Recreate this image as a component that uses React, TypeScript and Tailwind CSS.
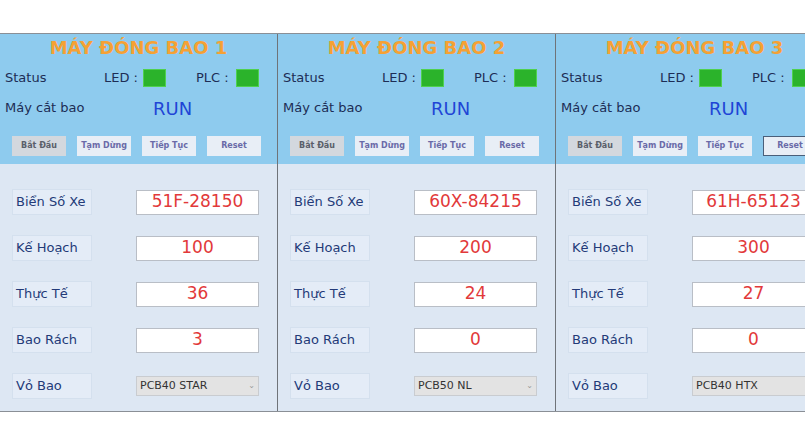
const machines = [
  { id: 1, plate: "51F-28150", plan: 100, actual: 36, torn: 3, bag: "PCB40 STAR", arrow: true },
  { id: 2, plate: "60X-84215", plan: 200, actual: 24, torn: 0, bag: "PCB50 NL", arrow: true },
  { id: 3, plate: "61H-65123", plan: 300, actual: 27, torn: 0, bag: "PCB40 HTX", arrow: false },
];

type Machine = (typeof machines)[number];

const ValueRow = ({ label, value }: { label: string; value: string | number }) => (
  <div className="flex h-[26px] items-center">
    <div className="ml-[12px] flex h-[26px] w-[80px] items-center border border-[#d4e0ee] bg-[#e4ecf7] pl-[3px] text-[13px] text-[#233a78]">
      {label}
    </div>
    <div className="ml-[44px] flex h-[25px] w-[123px] shrink-0 items-center justify-center border border-[#b9bec6] bg-white text-[17px] text-[#e2393a]">
      {value}
    </div>
  </div>
);

const Panel = ({ m, last }: { m: Machine; last: boolean }) => {
  const buttons = ["Bắt Đầu", "Tạm Dừng", "Tiếp Tục", "Reset"];
  return (
    <div className="flex w-[278px] shrink-0 flex-col border-r border-[#6f7378]">
      <div className="flex h-[130px] flex-col bg-[#8ecbee]">
        <div className="flex h-[26px] items-center justify-center text-[18px] font-bold text-[#f5a134]">
          MÁY ĐÓNG BAO {m.id}
        </div>
        <div className="flex h-[36px] items-center pl-[5px] text-[13px] text-[#1d2d55]">
          <span className="w-[99px]">Status</span>
          <span className="w-[39px]">LED :</span>
          <span className="h-[18px] w-[23px] border border-[#4fd04f] bg-[#2bb32b]" />
          <span className="ml-[30px] w-[40px]">PLC :</span>
          <span className="h-[18px] w-[23px] border border-[#4fd04f] bg-[#2bb32b]" />
        </div>
        <div className="flex h-[24px] items-center pl-[5px] text-[13px] text-[#1d2d55]">
          <span className="w-[148px]">Máy cắt bao</span>
          <span className="text-[18px] text-[#1f45d6]">RUN</span>
        </div>
        <div className="mt-[16px] flex h-[20px] gap-[11px] pl-[12px]">
          {buttons.map((b, i) => (
            <div
              key={b}
              className={`flex h-[20px] w-[54px] shrink-0 items-center justify-center text-[8px] font-bold ${
                i === 0 ? "bg-[#d3d8de] text-[#5a5f6a]" : "bg-[#e8eef6] text-[#6a6aa8]"
              } ${last && i === 3 ? "border border-[#4a5f7a]" : ""}`}
            >
              {b}
            </div>
          ))}
        </div>
      </div>
      <div className="flex h-[247px] flex-col gap-[20px] bg-[#dde7f3] pt-[25px]">
        <ValueRow label="Biển Số Xe" value={m.plate} />
        <ValueRow label="Kế Hoạch" value={m.plan} />
        <ValueRow label="Thực Tế" value={m.actual} />
        <ValueRow label="Bao Rách" value={m.torn} />
        <div className="flex h-[26px] items-center">
          <div className="ml-[12px] flex h-[26px] w-[80px] items-center border border-[#d4e0ee] bg-[#e4ecf7] pl-[3px] text-[13px] text-[#233a78]">
            Vỏ Bao
          </div>
          <div className="ml-[44px] flex h-[20px] w-[123px] shrink-0 items-center justify-between border border-[#c9ccd0] bg-[#e3e3e3] px-[3px] text-[11px] text-[#333]">
            <span>{m.bag}</span>
            {m.arrow && <span className="text-[8px] text-[#999]">⌄</span>}
          </div>
        </div>
      </div>
    </div>
  );
};

export default function App() {
  return (
    <div className="h-[422px] w-[810px] bg-white pt-[33px]" style={{ fontFamily: '"DejaVu Sans", Verdana, sans-serif' }}>
      <div className="flex w-[805px] overflow-hidden border-y border-[#8a8f96]">
        {machines.map((m, i) => (
          <Panel key={m.id} m={m} last={i === 2} />
        ))}
      </div>
    </div>
  );
}
